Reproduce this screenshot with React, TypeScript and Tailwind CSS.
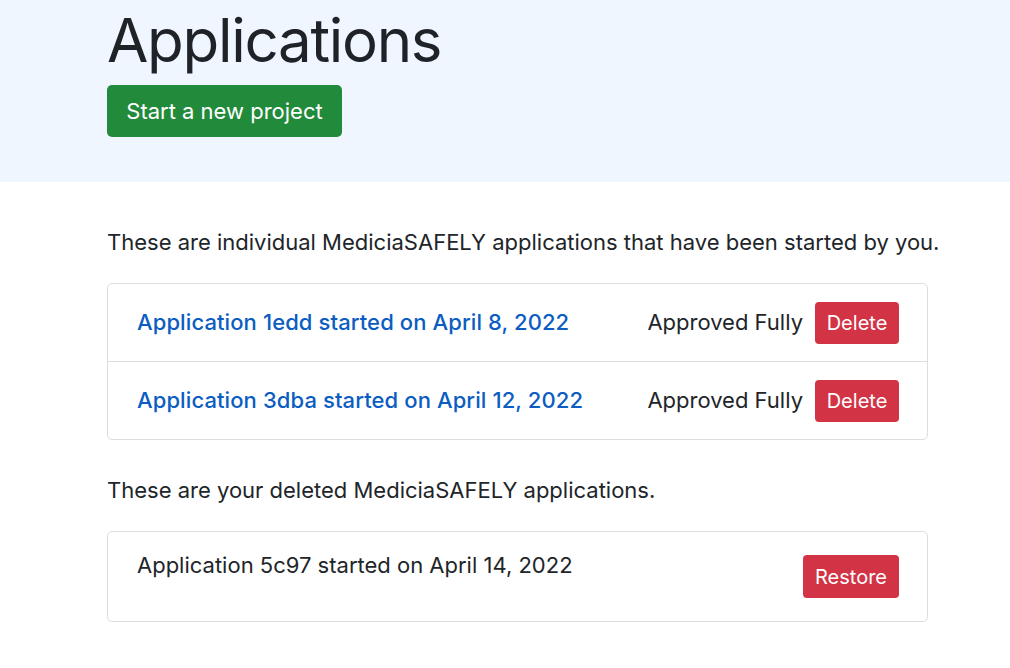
import React from "react";

const body = { fontFamily: "Inter, 'Noto Sans', sans-serif" };

export default function App() {
  return (
    <div className="min-h-[668px] bg-white text-[#1b1b1b]" style={body}>
      <div className="bg-[#eff6ff] h-[182px] overflow-hidden">
        <div className="ml-[107px] w-[821px]">
          <h1 className="pt-[4px] text-[60px] leading-[72px] font-normal text-[#1f2328] tracking-[-1.3px]">Applications</h1>
          <button className="mt-[9px] h-[52px] w-[235px] rounded-[5px] bg-[#228a3b] text-white text-[22px]">
            Start a new project
          </button>
        </div>
      </div>
      <div className="ml-[107px] w-[821px] pt-[45px]">
        <p className="text-[22px] leading-[30px] text-[#212529] whitespace-nowrap">
          These are individual MediciaSAFELY applications that have been started by you.
        </p>
        <div className="mt-[26px] border border-[#dddddd] rounded-[5px]">
          {[
            "Application 1edd started on April 8, 2022",
            "Application 3dba started on April 12, 2022",
          ].map((t, i) => (
            <div
              key={t}
              className={`flex items-center justify-between pl-[29px] pr-[28px] ${i === 0 ? "h-[78px] border-b border-[#dddddd]" : "h-[77px]"}`}
            >
              <a href="#" className="text-[22px] font-medium text-[#0b5dc2] tracking-[0.1px]">{t}</a>
              <div className="flex items-center gap-[12px]">
                <span className="text-[22px] text-[#212529]">Approved Fully</span>
                <button className="h-[42px] w-[84px] rounded-[4px] bg-[#d23345] text-white text-[20px]">
                  Delete
                </button>
              </div>
            </div>
          ))}
        </div>
        <p className="mt-[35px] text-[22px] leading-[30px] text-[#212529]">
          These are your deleted MediciaSAFELY applications.
        </p>
        <div className="mt-[26px] border border-[#dddddd] rounded-[5px] flex items-center justify-between h-[91px] pl-[29px] pr-[28px]">
          <span className="self-start pt-[18px] text-[22px] leading-[30px] text-[#212529]">Application 5c97 started on April 14, 2022</span>
          <button className="h-[43px] w-[96px] rounded-[4px] bg-[#d23345] text-white text-[20px]">
            Restore
          </button>
        </div>
      </div>
    </div>
  );
}
